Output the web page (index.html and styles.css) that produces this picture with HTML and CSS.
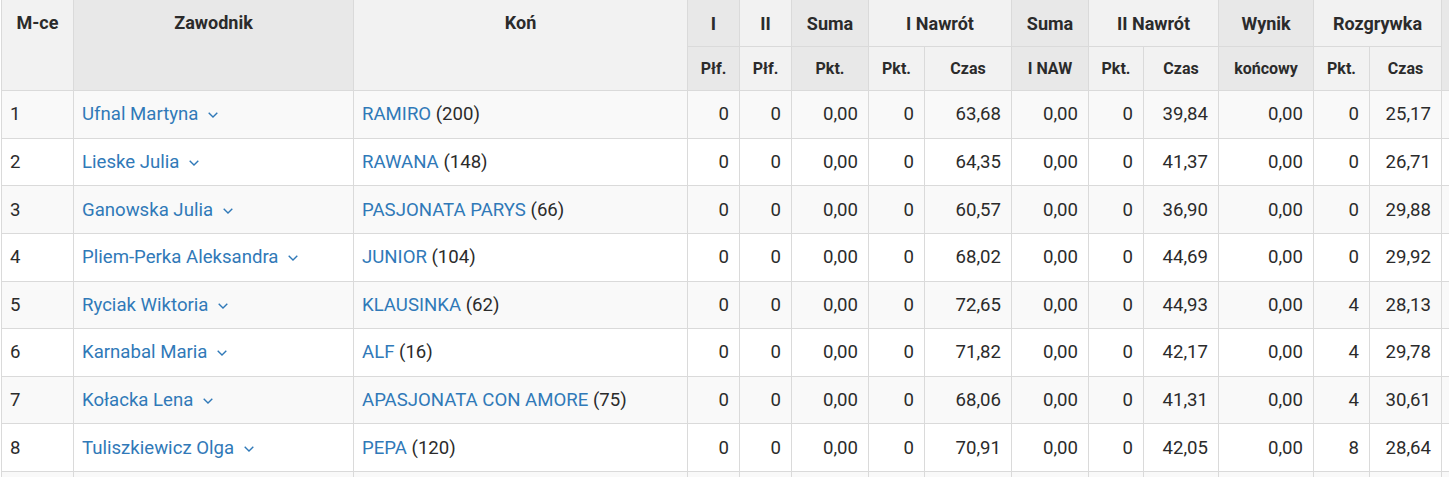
FILE: index.html
```html
<!DOCTYPE html>
<html lang="pl">
<head>
<meta charset="utf-8">
<title>Wyniki</title>
<link rel="stylesheet" href="styles.css">
</head>
<body>
<div class="wrap">
<table class="results">
  <colgroup>
    <col class="c-place"><col class="c-rider"><col class="c-horse">
    <col class="c-n52"><col class="c-n52"><col class="c-sum">
    <col class="c-pkt"><col class="c-czas1"><col class="c-sum">
    <col class="c-pkt2"><col class="c-czas2"><col class="c-wynik">
    <col class="c-pkt"><col class="c-czas3"><col class="c-extra">
  </colgroup>
  <thead>
    <tr class="h1">
      <th rowspan="2" class="light top">M-ce</th>
      <th rowspan="2" class="dark top">Zawodnik</th>
      <th rowspan="2" class="light top">Koń</th>
      <th class="dark">I</th>
      <th class="light">II</th>
      <th class="dark">Suma</th>
      <th colspan="2" class="light">I Nawrót</th>
      <th class="dark">Suma</th>
      <th colspan="2" class="light">II Nawrót</th>
      <th class="dark">Wynik</th>
      <th colspan="2" class="light">Rozgrywka</th>
      <th rowspan="2" class="dark top"></th>
    </tr>
    <tr class="h2">
      <th class="dark">Płf.</th>
      <th class="light">Płf.</th>
      <th class="dark">Pkt.</th>
      <th class="light">Pkt.</th>
      <th class="light">Czas</th>
      <th class="dark">I NAW</th>
      <th class="light">Pkt.</th>
      <th class="light">Czas</th>
      <th class="dark">końcowy</th>
      <th class="light">Pkt.</th>
      <th class="light">Czas</th>
    </tr>
  </thead>
  <tbody>
    <tr><td>1</td><td><a class="rider">Ufnal Martyna<svg class="chev" viewBox="0 0 10 6"><polyline points="0.7,0.8 5,5 9.3,0.8"/></svg></a></td><td><a>RAMIRO</a> (200)</td><td class="n">0</td><td class="n">0</td><td class="n">0,00</td><td class="n">0</td><td class="n">63,68</td><td class="n">0,00</td><td class="n">0</td><td class="n">39,84</td><td class="n">0,00</td><td class="n">0</td><td class="n">25,17</td><td></td></tr>
    <tr><td>2</td><td><a class="rider">Lieske Julia<svg class="chev" viewBox="0 0 10 6"><polyline points="0.7,0.8 5,5 9.3,0.8"/></svg></a></td><td><a>RAWANA</a> (148)</td><td class="n">0</td><td class="n">0</td><td class="n">0,00</td><td class="n">0</td><td class="n">64,35</td><td class="n">0,00</td><td class="n">0</td><td class="n">41,37</td><td class="n">0,00</td><td class="n">0</td><td class="n">26,71</td><td></td></tr>
    <tr><td>3</td><td><a class="rider">Ganowska Julia<svg class="chev" viewBox="0 0 10 6"><polyline points="0.7,0.8 5,5 9.3,0.8"/></svg></a></td><td><a>PASJONATA PARYS</a> (66)</td><td class="n">0</td><td class="n">0</td><td class="n">0,00</td><td class="n">0</td><td class="n">60,57</td><td class="n">0,00</td><td class="n">0</td><td class="n">36,90</td><td class="n">0,00</td><td class="n">0</td><td class="n">29,88</td><td></td></tr>
    <tr><td>4</td><td><a class="rider">Pliem-Perka Aleksandra<svg class="chev" viewBox="0 0 10 6"><polyline points="0.7,0.8 5,5 9.3,0.8"/></svg></a></td><td><a>JUNIOR</a> (104)</td><td class="n">0</td><td class="n">0</td><td class="n">0,00</td><td class="n">0</td><td class="n">68,02</td><td class="n">0,00</td><td class="n">0</td><td class="n">44,69</td><td class="n">0,00</td><td class="n">0</td><td class="n">29,92</td><td></td></tr>
    <tr><td>5</td><td><a class="rider">Ryciak Wiktoria<svg class="chev" viewBox="0 0 10 6"><polyline points="0.7,0.8 5,5 9.3,0.8"/></svg></a></td><td><a>KLAUSINKA</a> (62)</td><td class="n">0</td><td class="n">0</td><td class="n">0,00</td><td class="n">0</td><td class="n">72,65</td><td class="n">0,00</td><td class="n">0</td><td class="n">44,93</td><td class="n">0,00</td><td class="n">4</td><td class="n">28,13</td><td></td></tr>
    <tr><td>6</td><td><a class="rider">Karnabal Maria<svg class="chev" viewBox="0 0 10 6"><polyline points="0.7,0.8 5,5 9.3,0.8"/></svg></a></td><td><a>ALF</a> (16)</td><td class="n">0</td><td class="n">0</td><td class="n">0,00</td><td class="n">0</td><td class="n">71,82</td><td class="n">0,00</td><td class="n">0</td><td class="n">42,17</td><td class="n">0,00</td><td class="n">4</td><td class="n">29,78</td><td></td></tr>
    <tr><td>7</td><td><a class="rider">Kołacka Lena<svg class="chev" viewBox="0 0 10 6"><polyline points="0.7,0.8 5,5 9.3,0.8"/></svg></a></td><td><a>APASJONATA CON AMORE</a> (75)</td><td class="n">0</td><td class="n">0</td><td class="n">0,00</td><td class="n">0</td><td class="n">68,06</td><td class="n">0,00</td><td class="n">0</td><td class="n">41,31</td><td class="n">0,00</td><td class="n">4</td><td class="n">30,61</td><td></td></tr>
    <tr><td>8</td><td><a class="rider">Tuliszkiewicz Olga<svg class="chev" viewBox="0 0 10 6"><polyline points="0.7,0.8 5,5 9.3,0.8"/></svg></a></td><td><a>PEPA</a> (120)</td><td class="n">0</td><td class="n">0</td><td class="n">0,00</td><td class="n">0</td><td class="n">70,91</td><td class="n">0,00</td><td class="n">0</td><td class="n">42,05</td><td class="n">0,00</td><td class="n">8</td><td class="n">28,64</td><td></td></tr>
    <tr><td>&nbsp;</td><td></td><td></td><td></td><td></td><td></td><td></td><td></td><td></td><td></td><td></td><td></td><td></td><td></td><td></td></tr>
  </tbody>
</table>
</div>
</body>
</html>
```
FILE: styles.css
```css
html, body {
  margin: 0;
  padding: 0;
  background: #ffffff;
}
.wrap {
  width: 1449px;
  height: 477px;
  overflow: hidden;
  padding-left: 1px;
  box-sizing: border-box;
}
.results {
  border-collapse: collapse;
  table-layout: fixed;
  width: 1500px;
  font-family: Roboto, "Noto Sans", "Liberation Sans", sans-serif;
  font-size: 18.6px;
  color: #2b2b2b;
}
.c-place { width: 72px; }
.c-rider { width: 280px; }
.c-horse { width: 334px; }
.c-n52 { width: 52px; }
.c-sum { width: 77px; }
.c-pkt { width: 56px; }
.c-pkt2 { width: 55px; }
.c-czas1 { width: 87px; }
.c-czas2 { width: 75px; }
.c-czas3 { width: 72px; }
.c-wynik { width: 95px; }
.c-extra { width: 59px; }

.results th,
.results td {
  border: 1px solid #dadada;
  padding: 0 10px 0 8px;
  white-space: nowrap;
  overflow: hidden;
}
.results th {
  font-weight: 700;
  color: #2b2b2b;
  text-align: center;
  padding: 0 9px;
}
.h1 th {
  height: 46px;
  font-size: 18px;
  vertical-align: middle;
}
.h1 th.top {
  vertical-align: top;
  padding-top: 10px;
  line-height: 25px;
}
.h2 th {
  height: 43px;
  font-size: 16px;
  vertical-align: middle;
}
.results thead tr:first-child th {
  border-top: none;
}
.results th.light { background: #f2f2f2; }
.results th.dark { background: #e8e8e8; }

.results td {
  height: 46.625px;
  vertical-align: middle;
  text-align: left;
}
.results td.n { text-align: right; }
.results tbody tr:nth-child(odd) td { background: #f9f9f9; }
.results tbody tr:nth-child(even) td { background: #ffffff; }

.results a {
  color: #3079b8;
  text-decoration: none;
}
.rider {
  display: inline-flex;
  align-items: center;
  gap: 10px;
}
.chev {
  width: 10px;
  height: 6px;
  margin-top: 2px;
  fill: none;
  stroke: #3079b8;
  stroke-width: 1.4;
}
```
